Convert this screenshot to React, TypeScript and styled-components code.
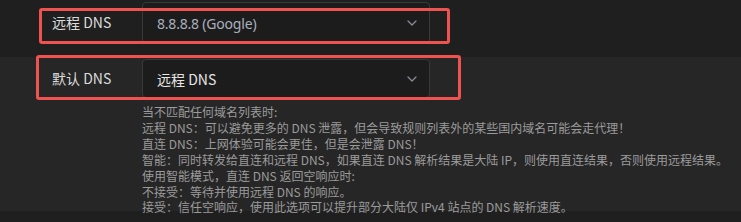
import React from "react";
import styled, { createGlobalStyle } from "styled-components";

const Global = createGlobalStyle`
  html, body { margin: 0; padding: 0; background: #1f1f1f; }
  body { font-family: "Noto Sans", "Noto Sans CJK SC", sans-serif; }
`;

const Page = styled.div`
  position: relative;
  width: 741px;
  height: 222px;
  overflow: hidden;
  background: #1f1f1f;
`;

const Row = styled.div<{ $bg: string; $h: number; $pt: number }>`
  display: grid;
  grid-template-columns: 142px 288px;
  align-items: start;
  height: ${(p) => p.$h}px;
  padding-top: ${(p) => p.$pt}px;
  box-sizing: border-box;
  background: ${(p) => p.$bg};
`;

const Label = styled.div<{ $top: number }>`
  padding-left: 52px;
  padding-top: ${(p) => p.$top}px;
  font-family: "Noto Sans CJK SC", sans-serif;
  font-size: 14px;
  line-height: 20px;
  color: #dcdcdc;
`;

const Select = styled.div<{ $h: number; $muted?: boolean }>`
  display: flex;
  align-items: center;
  justify-content: space-between;
  height: ${(p) => p.$h}px;
  box-sizing: border-box;
  padding: 0 11px 0 14px;
  border: 1px solid #393939;
  border-radius: 4px;
  background: #1c1c1c;
  font-family: ${(p) => (p.$muted ? '"Noto Sans", sans-serif' : '"Noto Sans CJK SC", sans-serif')};
  font-size: 14px;
  letter-spacing: ${(p) => (p.$muted ? "-0.2px" : "0")};
  color: ${(p) => (p.$muted ? "#a9b0bd" : "#e6e6e6")};
`;

const Lower = styled.div`
  background: #262626;
  height: 154px;
`;

const Desc = styled.div`
  padding: 5px 0 0 142px;
  font-family: "Noto Sans CJK SC", sans-serif;
  font-size: 12px;
  line-height: 15.9px;
  color: #9b9b9b;
  white-space: nowrap;
`;

const Mark = styled.div<{ $l: number; $t: number; $w: number; $h: number }>`
  position: absolute;
  left: ${(p) => p.$l}px;
  top: ${(p) => p.$t}px;
  width: ${(p) => p.$w}px;
  height: ${(p) => p.$h}px;
  box-sizing: border-box;
  border: 3px solid #ef5350;
  border-radius: 3px;
  pointer-events: none;
`;

const Chevron = () => (
  <svg width="12" height="8" viewBox="0 0 12 8" fill="none">
    <path d="M2 2 L6 6 L10 2" stroke="#8a8c91" strokeWidth="1.3" strokeLinecap="round" strokeLinejoin="round" />
  </svg>
);

const lines = [
  "当不匹配任何域名列表时:",
  "远程 DNS：可以避免更多的 DNS 泄露，但会导致规则列表外的某些国内域名可能会走代理！",
  "直连 DNS：上网体验可能会更佳，但是会泄露 DNS！",
  "智能：同时转发给直连和远程 DNS，如果直连 DNS 解析结果是大陆 IP，则使用直连结果，否则使用远程结果。",
  "使用智能模式，直连 DNS 返回空响应时:",
  "不接受：等待并使用远程 DNS 的响应。",
  "接受：信任空响应，使用此选项可以提升部分大陆仅 IPv4 站点的 DNS 解析速度。",
];

export default function App() {
  return (
    <>
      <Global />
      <Page>
        <Row $bg="#1f1f1f" $h={57} $pt={2}>
          <Label $top={10}>远程 DNS</Label>
          <Select $h={42} $muted>
            <span>8.8.8.8 (Google)</span>
            <Chevron />
          </Select>
        </Row>
        <Lower>
          <Row $bg="transparent" $h={42} $pt={2}>
            <Label $top={9}>默认 DNS</Label>
            <Select $h={39}>
              <span>远程 DNS</span>
              <Chevron />
            </Select>
          </Row>
          <Desc>
            {lines.map((l, i) => (
              <div key={i}>{l}</div>
            ))}
          </Desc>
        </Lower>
        <Mark $l={39} $t={8} $w={411} $h={36} />
        <Mark $l={36} $t={55} $w={425} $h={45} />
      </Page>
    </>
  );
}
